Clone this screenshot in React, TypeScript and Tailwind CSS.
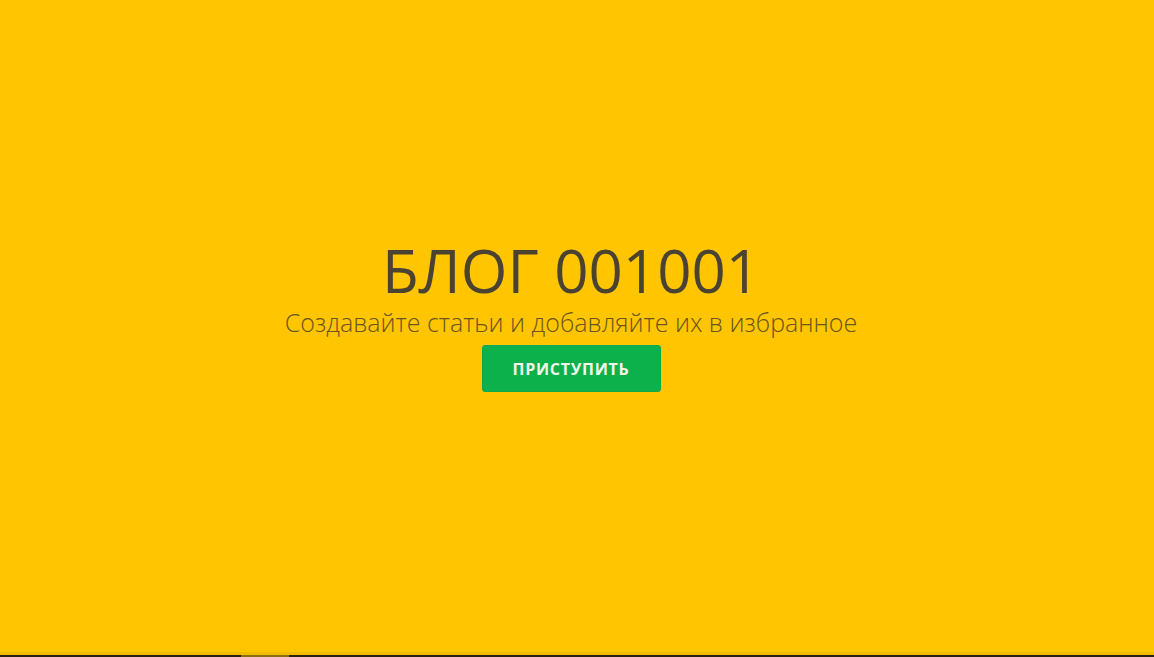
export default function App() {
	return (
		<div className="flex h-[657px] w-full flex-col bg-[#ffc500] font-['Open_Sans',sans-serif]">
			<main className="flex flex-1 flex-col items-center pr-[12px] pt-[238px]">
				<h1 className="text-[60px] leading-[64px] font-normal text-[#4a4331]">
					БЛОГ 001001
				</h1>
				<p className="mt-[4px] text-[25px] leading-[32px] font-light text-[#6b5520]">
					Создавайте статьи и добавляйте их в избранное
				</p>
				<button className="mt-[7px] h-[47px] w-[179px] rounded-[3px] border border-[#0fa84a] bg-[#0db14b] text-[16px] font-bold tracking-[0.7px] text-[#f2f7ea]">
					ПРИСТУПИТЬ
				</button>
			</main>
			<div className="h-[3px] bg-[#f2ba00]" />
			<div className="flex h-[2px] bg-[#2a2110]">
				<div className="ml-[241px] w-[48px] bg-[#8a6d10]" />
			</div>
		</div>
	)
}
